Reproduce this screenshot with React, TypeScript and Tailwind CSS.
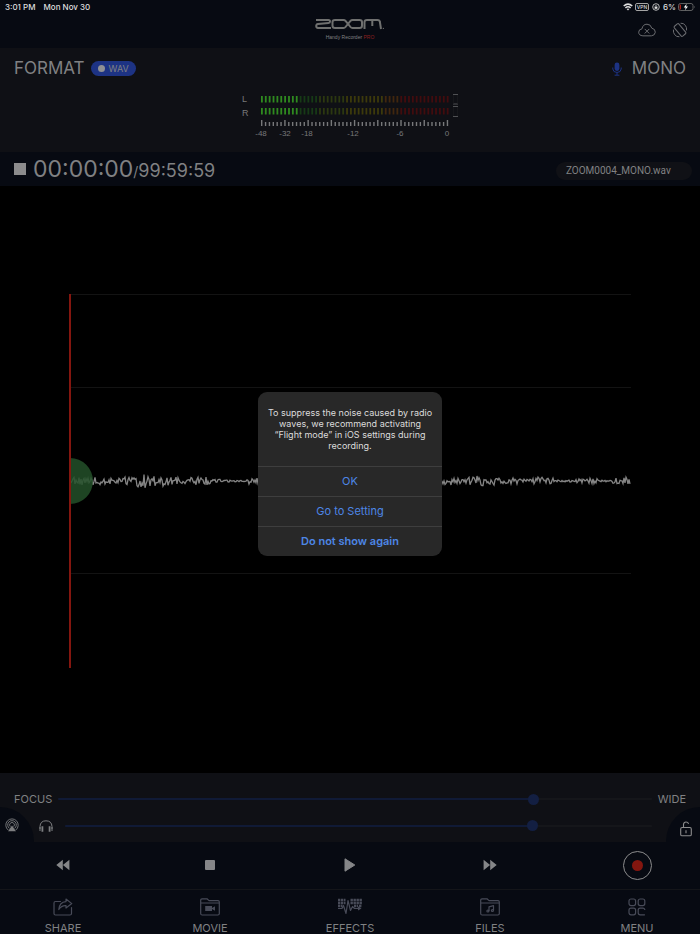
import React, { useState } from 'react';

const STEPS = Array.from({ length: 49 }, (_, i) => i);

const SCALE_LABELS = [
  { x: 21, text: '-48' },
  { x: 45, text: '-32' },
  { x: 67, text: '-18' },
  { x: 113, text: '-12' },
  { x: 160, text: '-6' },
  { x: 207, text: '0' },
];

// peak height of the wave, sampled at even distances along the track
const ENVELOPE = [4, 4, 4, 3, 3, 4, 7, 5, 5, 4, 3, 4, 4, 2, 1, 1, 3, 3, 4, 4, 3, 3, 4, 3, 3, 4, 4, 3, 3, 4, 4, 3, 4, 3, 4, 3, 4, 5, 4, 3, 3, 2, 4, 3, 1, 1, 2, 3, 1, 3, 4];

function buildWave() {
  let seed = 17;
  let d = 'M2 187';
  for (let x = 2; x <= 561; x += 1) {
    seed = (seed * 1103515245 + 12345) % 2147483648;
    const peak = ENVELOPE[Math.floor((x / 562) * ENVELOPE.length)];
    const r = (seed / 2147483648) * 2 - 1;
    d += ` L${x} ${(187 + r * peak).toFixed(1)}`;
  }
  return d;
}

const WAVE = buildWave();

function barColor(i: number) {
  if (i < 10) return '#2f8a1f';
  if (i < 15) return '#173a16';
  if (i < 22) return '#2c3810';
  if (i < 32) return '#3d3a0b';
  if (i < 36) return '#41270e';
  return '#420c0e';
}

function Logo() {
  return (
    <svg viewBox="0 0 70 12" className="h-3 w-[70px]" fill="none" stroke="#6f706f" strokeWidth="2" strokeLinejoin="round">
      <path d="M1 1.9H13.5Q15 1.9 15 3.4T13.5 5L3 5.9Q1.2 6.2 1.2 8T3 10H16" />
      <path d="M33 5.9L30.5 2.9Q29.7 1.9 28.5 1.9H20Q17.5 1.9 17.5 4V7.8Q17.5 10 20 10H28.5Q29.7 10 30.5 9L35.5 2.9Q36.3 1.9 37.5 1.9H44.5Q47 1.9 47 4V7.8Q47 10 44.5 10H37.5Q36.3 10 35.5 9L33 5.9" />
      <path d="M49.5 11V4Q49.5 1.9 52 1.9H62.5Q64.7 1.9 64.9 4L66 11M57.3 2V8" />
      <path d="M67.8 10.4h1.2" strokeWidth="1" />
    </svg>
  );
}

function StatusBar() {
  return (
    <div className="flex h-3.5 items-center justify-between pr-1 pl-[5px] text-[8px] leading-[14px] font-medium text-[#dedede]">
      <div className="flex gap-2">
        <span>3:01 PM</span>
        <span>Mon Nov 30</span>
      </div>
      <div className="flex items-center gap-0.5">
        <svg viewBox="0 0 10 8" className="h-2 w-2.5" fill="none" stroke="currentColor" strokeWidth="1.5">
          <path d="M.7 3Q5-.8 9.3 3M2.4 4.9Q5 2.7 7.6 4.9" />
          <path d="M5 7.4L3.6 6Q5 5 6.4 6z" fill="currentColor" stroke="none" />
        </svg>
        <span className="mr-px flex h-2 w-3.5 items-center justify-center rounded-xs border border-[#a5a5a5] text-[5px] leading-none">VPN</span>
        <svg viewBox="0 0 8 8" className="mr-px h-2 w-2" fill="none" stroke="currentColor">
          <circle cx="4" cy="4" r="3.3" strokeWidth=".8" />
          <path d="M2.6 3.8h2.8v2H2.6z" fill="currentColor" stroke="none" />
          <path d="M3.2 4V2.9q.8-1 1.6 0V4" strokeWidth=".6" />
        </svg>
        <span>6%</span>
        <svg viewBox="0 0 18 8" className="h-2 w-[18px]" fill="none">
          <rect x=".5" y=".5" width="14.5" height="7" rx="2" stroke="#757575" strokeWidth=".8" />
          <rect x="1.6" y="1.6" width="1.3" height="4.8" fill="#c02418" />
          <path d="M8.6.8L5.8 4.4h1.9L7 7.3l3-3.7H8.1z" fill="#fff" />
          <path d="M16.2 2.8q1.2 1.2 0 2.4z" fill="#757575" />
        </svg>
      </div>
    </div>
  );
}

function LevelMeter() {
  return (
    <svg viewBox="0 0 220 48" className="h-12 w-[220px] font-['Liberation_Sans',sans-serif]" fontSize="8" fill="#77787a">
      <text x="2" y="10" fontSize="9">L</text>
      <text x="2" y="24" fontSize="9">R</text>
      {STEPS.map((i) => (
        <g key={i}>
          <rect x={21 + i * 3.87} y="4" width="1.8" height="6.5" fill={barColor(i)} />
          <rect x={21 + i * 3.87} y="16" width="1.8" height="6.5" fill={barColor(i)} />
          <rect
            x={21 + i * 3.87}
            y={i % 6 === 0 ? 28 : 30}
            width="1.4"
            height={i % 6 === 0 ? 6 : 4}
            fill="#77787a"
          />
        </g>
      ))}
      <path d="M213 2.5h5M213 12h5M213 14.5h5M213 24.5h5" stroke="#505154" strokeWidth="1" />
      <path d="M213.5 3v9M217.5 3v9M213.5 15v9M217.5 15v9" stroke="#1b1c20" strokeWidth=".6" />
      {SCALE_LABELS.map((l) => (
        <text key={l.text} x={l.x} y="44" textAnchor="middle">{l.text}</text>
      ))}
    </svg>
  );
}

function Slider({ label, initial }: { label: string; initial: number }) {
  const [value, setValue] = useState(initial);
  return (
    <input
      type="range"
      aria-label={label}
      min={0}
      max={1000}
      value={value}
      onChange={(e) => setValue(Number(e.target.value))}
      className="h-0.5 min-w-0 flex-1 appearance-none rounded-full [&::-webkit-slider-thumb]:h-[11px] [&::-webkit-slider-thumb]:w-[11px] [&::-webkit-slider-thumb]:appearance-none [&::-webkit-slider-thumb]:rounded-full [&::-webkit-slider-thumb]:bg-[#131f42]"
      style={{ background: `linear-gradient(to right, #101a36 ${value / 10}%, #15161a ${value / 10}%)` }}
    />
  );
}

function FolderIcon({ children }: { children: React.ReactNode }) {
  return (
    <svg viewBox="0 0 20 18" className="h-[18px] w-5" fill="none" stroke="#484b58" strokeWidth="1.2" strokeLinejoin="round">
      <path d="M.7 15V2Q.7.8 2 .8H7L9 2.6H18Q19.3 2.6 19.3 4V15.5Q19.3 17 17.8 17H2.2Q.7 17 .7 15.5zM.7 5H19.3" />
      {children}
    </svg>
  );
}

const TABS = [
  {
    label: 'SHARE',
    icon: (
      <svg viewBox="0 0 20 18" className="h-[18px] w-5" fill="none" stroke="#484b58" strokeWidth="1.2" strokeLinejoin="round" strokeLinecap="round">
        <path d="M7.5 3.5H2.5Q1 3.5 1 5V15.5Q1 17 2.5 17H17Q18.5 17 18.5 15.5V9.5" />
        <path d="M13 1L18.8 5.6L13 10V7.6Q8.5 7.2 5.8 11.5Q6.5 4 13 3.6z" />
      </svg>
    ),
  },
  {
    label: 'MOVIE',
    icon: (
      <FolderIcon>
        <path d="M5.2 8h6.8v5H5.2zM12 10l3-1.7v4.5L12 11z" fill="#484b58" stroke="none" />
      </FolderIcon>
    ),
  },
  {
    label: 'EFFECTS',
    icon: (
      <svg viewBox="0 0 24 18" className="h-[18px] w-6" fill="none" stroke="#484b58">
        <path d="M0 2h7.5M12.5 2H24M0 5h7.5M12.5 5H24M0 8h4.5M16 8h4M21 8h3" strokeWidth="2.4" strokeDasharray="2.4 .6" />
        <path d="M0 10.5H4L5.5 7.5L8 15.5L10 2.5L12.5 12.5L14.5 8.5L16.5 10.5H21" strokeWidth="1.2" strokeLinejoin="round" />
        <path d="M20 8.3L23.5 10.5L20 12.5z" fill="#484b58" stroke="none" />
      </svg>
    ),
  },
  {
    label: 'FILES',
    icon: (
      <FolderIcon>
        <path d="M9 13V8.8L13.5 7.7V12.5" />
        <circle cx="7.9" cy="13" r="1" />
        <circle cx="12.4" cy="12.5" r="1" />
      </FolderIcon>
    ),
  },
  {
    label: 'MENU',
    icon: (
      <svg viewBox="0 0 18 18" className="h-[18px] w-[18px]" fill="none" stroke="#484b58" strokeWidth="1.2" strokeLinecap="round">
        <rect x="1" y="1" width="6.6" height="6.6" rx="2" />
        <rect x="10.2" y="1" width="6.6" height="6.6" rx="2" />
        <rect x="1" y="10.2" width="6.6" height="6.6" rx="2" />
        <path d="M16.8 11.5Q16.3 10.2 15 10.2H12.2Q10.2 10.2 10.2 12.2V14.8Q10.2 16.8 12.2 16.8H16.5" />
      </svg>
    ),
  },
];

const TRANSPORT = [
  {
    label: 'Rewind',
    icon: (
      <svg viewBox="0 0 14 12" className="h-3 w-3.5" fill="#858688">
        <path d="M6.8.8v10.4L.3 6zM13.4.8v10.4L6.9 6z" />
      </svg>
    ),
  },
  { label: 'Stop', icon: <span className="h-2.5 w-2.5 rounded-[1px] bg-[#858688]" /> },
  {
    label: 'Play',
    icon: (
      <svg viewBox="0 0 12 16" className="h-4 w-3" fill="#858688" stroke="#858688" strokeLinejoin="round">
        <path d="M1 1.8v12.4L10.8 8z" />
      </svg>
    ),
  },
  {
    label: 'Fast forward',
    icon: (
      <svg viewBox="0 0 14 12" className="h-3 w-3.5" fill="#858688">
        <path d="M.6.8v10.4L7.1 6zM7.2.8v10.4L13.7 6z" />
      </svg>
    ),
  },
  {
    label: 'Record',
    icon: (
      <span className="flex h-[29px] w-[29px] items-center justify-center rounded-full border border-[#8c8c8d]">
        <span className="h-[11px] w-[11px] rounded-full bg-[#84160f]" />
      </span>
    ),
  },
];

function NoiseDialog({ onClose }: { onClose: () => void }) {
  return (
    <div className="absolute inset-x-0 top-3.5 bottom-0 flex items-center justify-center">
      <div role="dialog" aria-label="Flight mode" className="w-46 overflow-hidden rounded-[9px] bg-[#282828] text-center">
        <p className="px-1 py-[15px] text-[9px] leading-[11px] text-[#dcdcdc]">
          To suppress the noise caused by radio
          <br />
          waves, we recommend activating
          <br />
          “Flight mode” in iOS settings during
          <br />
          recording.
        </p>
        <div className="flex flex-col text-[11px] leading-[29px] text-[#4d86e6]">
          <button onClick={onClose} className="border-t border-[#3e3e3e]">OK</button>
          <button onClick={onClose} className="border-t border-[#3e3e3e]">Go to Setting</button>
          <button onClick={onClose} className="border-t border-[#3e3e3e] font-semibold">Do not show again</button>
        </div>
      </div>
    </div>
  );
}

export default function App() {
  const [showDialog, setShowDialog] = useState(true);

  return (
    <div className="relative flex min-h-screen flex-col bg-black font-['Inter','Liberation_Sans',sans-serif] text-[#808183]">
      <header className="h-12 bg-[#070a12]">
        <StatusBar />
        <div className="grid grid-cols-[1fr_auto_1fr] items-center pt-1">
          <div className="col-start-2 flex flex-col items-center">
            <Logo />
            <p className="pt-[3px] font-['Liberation_Sans',sans-serif] text-[5px] leading-2">
              Handy Recorder <span className="text-[#8a2020]">PRO</span>
            </p>
          </div>
          <div className="flex justify-end gap-4 pr-3">
            <button aria-label="Cloud">
              <svg viewBox="0 0 18 14" className="h-3.5 w-[18px]" fill="none" stroke="#6c6d71" strokeWidth="1" strokeLinecap="round">
                <path d="M4.5 12.8Q.7 12.5.7 9.2Q.8 6.2 4 5.8Q4.8 1.2 9 1.2Q12.8 1.2 13.8 5.2Q17.3 5.8 17.3 9.2Q17 12.5 13.8 12.8z" />
                <path d="M7 6.2L11 10.2M11 6.2L7 10.2" />
              </svg>
            </button>
            <button aria-label="Rotation">
              <svg viewBox="0 0 16 16" className="h-4 w-4" fill="none" stroke="#6c6d71" strokeWidth="1" strokeLinecap="round">
                <rect x="5" y="1.6" width="6" height="12.8" rx="1.2" transform="rotate(-40 8 8)" />
                <path d="M9 1.2Q11.6 1 13.4 3.4Q14.9 5.4 14.6 8M7 14.8Q4.4 15 2.6 12.6Q1.1 10.6 1.4 8" />
              </svg>
            </button>
          </div>
        </div>
      </header>

      <section className="bg-[#0f1015] pb-3">
        <div className="flex h-11 items-center justify-between px-3.5 pb-[3px] text-[17px]">
          <div className="flex items-center gap-1.5">
            <h1>FORMAT</h1>
            <button className="flex h-[15px] items-center gap-1 rounded-full bg-[#1d3384] px-[7px] text-[9px]">
              <span className="h-[7px] w-[7px] rounded-full bg-[#909194]" />
              WAV
            </button>
          </div>
          <div className="flex items-center gap-2.5">
            <svg viewBox="0 0 10 14" className="h-3.5 w-2.5" fill="none" stroke="#1d3384" strokeWidth="1">
              <rect x="2.6" y=".5" width="4.8" height="8.4" rx="2.4" fill="#1d3384" stroke="none" />
              <path d="M.8 5.5V7Q1 10.3 5 10.5Q9 10.3 9.2 7V5.5M5 10.5V13M2.6 13.2H7.4" />
            </svg>
            <span>MONO</span>
          </div>
        </div>
        <div className="flex justify-center">
          <LevelMeter />
        </div>
      </section>

      <section className="flex h-[34px] items-center justify-between bg-[#070a12] pr-2 pl-3.5">
        <div className="flex items-center">
          <span className="mr-[7px] h-3 w-3 bg-[#8c8c8d]" />
          <p className="pt-0.5 text-[23px] leading-8">
            00:00:00<span className="text-[14px]">/</span><span className="text-[18px]">99:59:59</span>
          </p>
        </div>
        <p className="mt-1 h-[18px] w-[136px] rounded-full bg-[#101116] px-2.5 font-['Roboto',sans-serif] text-[10px] leading-[18px]">
          ZOOM0004_MONO.wav
        </p>
      </section>

      <main className="flex flex-1 items-center px-[69px] pt-0.5">
        <svg viewBox="0 0 562 374" className="h-auto w-full" fill="none">
          <path d="M2 .5H562M2 93.5H562M2 279.5H562" stroke="#131313" />
          <path d={WAVE} stroke="#858585" strokeWidth="1.3" />
          <path d="M0 164A23 23 0 0 1 1 164A23 23 0 0 1 1 210H0z" fill="#235029" fillOpacity=".85" />
          <path d="M1 0V374" stroke="#84160f" strokeWidth="2" />
        </svg>
      </main>

      <section className="bg-[#0f1015] text-[11px]">
        <div className="flex h-[34px] items-center gap-1.5 px-3.5 pt-[18px]">
          <span>FOCUS</span>
          <Slider label="Focus to wide" initial={806} />
          <span>WIDE</span>
        </div>
        <div className="flex h-[35px] items-center">
          <button aria-label="AirPlay" className="flex h-[35px] w-[34px] items-center rounded-tr-full bg-[#070a12] pl-[5px]">
            <svg viewBox="0 0 14 14" className="h-3.5 w-3.5" fill="none" stroke="#7d7e80" strokeWidth=".9">
              <path d="M3.2 12A6.2 6.2 0 1 1 10.8 12M4.3 10.3A4.3 4.3 0 1 1 9.7 10.3M5.3 8.6A2.4 2.4 0 1 1 8.7 8.6" />
              <path d="M7 7.6L11 13.2H3z" fill="#7d7e80" stroke="none" />
            </svg>
          </button>
          <div className="flex flex-1 items-center gap-3 pt-0.5 pl-[5px]">
            <svg viewBox="0 0 14 12" className="h-3 w-3.5" fill="none" stroke="#7d7e80">
              <path d="M1 9V6.5Q1.3.8 7 .8Q12.7.8 13 6.5V9" strokeWidth="1" />
              <path d="M3.4 6.3v5.5M10.6 6.3v5.5" strokeWidth="1.8" />
              <path d="M1 7v4M13 7v4" strokeWidth="1" />
            </svg>
            <Slider label="Headphone volume" initial={802} />
          </div>
          <button aria-label="Unlock" className="ml-3.5 flex h-[35px] w-[34px] items-center justify-end rounded-tl-full bg-[#070a12] pt-2 pr-2">
            <svg viewBox="0 0 12 16" className="h-4 w-3" fill="none" stroke="#8c8c8d" strokeWidth="1.1">
              <rect x=".7" y="6.5" width="10.6" height="8.3" rx="1.4" />
              <path d="M3.5 6.5V3.4Q3.7 1 6 1Q8 1 8.6 2.8M6 9.3V12.2" />
            </svg>
          </button>
        </div>
      </section>

      <section className="grid h-[47px] grid-cols-[18%_24%_16%_24%_18%] bg-[#070a12]">
        {TRANSPORT.map((b) => (
          <button key={b.label} aria-label={b.label} className="flex items-center justify-center pb-px">
            {b.icon}
          </button>
        ))}
      </section>

      <nav className="grid h-[45px] grid-cols-[18%_24%_16%_24%_18%] overflow-hidden border-t border-[#141519] bg-[#070a12] text-[11px] leading-4">
        {TABS.map((tab) => (
          <button key={tab.label} className="flex flex-col items-center gap-1 pt-2">
            {tab.icon}
            <span>{tab.label}</span>
          </button>
        ))}
      </nav>

      {showDialog && <NoiseDialog onClose={() => setShowDialog(false)} />}
    </div>
  );
}
